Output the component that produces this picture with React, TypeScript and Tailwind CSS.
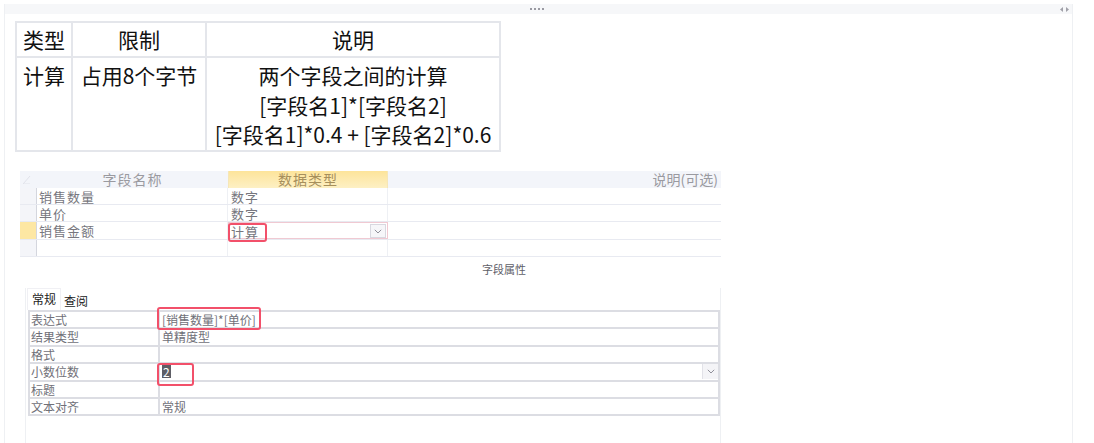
import React from "react";

const Chevron = ({ size = 8 }: { size?: number }) => (
  <svg width={size} height={size * 0.6} viewBox="0 0 10 6" fill="none">
    <path d="M1 1 L5 5 L9 1" stroke="#8a8a94" strokeWidth="1.2" />
  </svg>
);

export default function App() {
  const rows = [
    { name: "销售数量", type: "数字" },
    { name: "单价", type: "数字" },
    { name: "销售金额", type: "计算", sel: true },
    { name: "", type: "" },
  ];
  const props = [
    { k: "表达式", v: "[销售数量]*[单价]" },
    { k: "结果类型", v: "单精度型" },
    { k: "格式", v: "" },
    { k: "小数位数", v: "2", dd: true },
    { k: "标题", v: "" },
    { k: "文本对齐", v: "常规" },
  ];
  return (
    <div className="w-[1094px] h-[443px] bg-white overflow-hidden font-['Noto_Sans_CJK_SC','Noto_Sans',sans-serif]">
      <div className="ml-[4px] mt-[4px] w-[1069px] h-[439px] border-x border-[#eef0f3] flex flex-col">
        {/* top bar */}
        <div className="h-[10px] bg-[#f6f7f9] flex items-center">
          <div className="flex-1" />
          <div className="flex gap-[2px]">
            <span className="w-[2px] h-[2px] bg-[#9a9aa2]" />
            <span className="w-[2px] h-[2px] bg-[#9a9aa2]" />
            <span className="w-[2px] h-[2px] bg-[#9a9aa2]" />
            <span className="w-[2px] h-[2px] bg-[#9a9aa2]" />
          </div>
          <div className="flex-1 flex justify-end pr-[3px] gap-[3px]">
            <svg width="3" height="5" viewBox="0 0 3 5"><path d="M3 0 L0 2.5 L3 5Z" fill="#a0a0a8" /></svg>
            <svg width="3" height="5" viewBox="0 0 3 5"><path d="M0 0 L3 2.5 L0 5Z" fill="#a0a0a8" /></svg>
          </div>
        </div>

        {/* spec table */}
        <table className="mt-[7px] ml-[10px] w-[486px] border-collapse text-[21px] text-[#111] leading-[29.5px]">
          <tbody>
            <tr className="h-[35px]">
              <td className="w-[56px] border-2 border-[#e4e6eb] text-center align-middle">类型</td>
              <td className="w-[134px] border-2 border-[#e4e6eb] text-center align-middle">限制</td>
              <td className="border-2 border-[#e4e6eb] text-center align-middle">说明</td>
            </tr>
            <tr className="h-[94px]">
              <td className="border-2 border-[#e4e6eb] text-center align-top pt-[3px]">计算</td>
              <td className="border-2 border-[#e4e6eb] text-center align-top pt-[3px]">占用8个字节</td>
              <td className="border-2 border-[#e4e6eb] text-center align-top pt-[3px] whitespace-nowrap">
                <div>两个字段之间的计算</div>
                <div>[字段名1]*[字段名2]</div>
                <div>[字段名1]*0.4 + [字段名2]*0.6</div>
              </td>
            </tr>
          </tbody>
        </table>

        {/* access design grid */}
        <div className="mt-[19px] ml-[15px] w-[701px] text-[13px] leading-[17px]">
          <div className="flex h-[17px]">
            <div className="w-[17px] bg-[#f3f5fa]">
              <svg width="8" height="8" viewBox="0 0 8 8" className="ml-[3px] mt-[5px]">
                <path d="M7 0 L0 8 L7 8" fill="none" stroke="#e0e2ea" strokeWidth="1" />
              </svg>
            </div>
            <div className="w-[191px] bg-[#f3f5fa] text-center text-[14px] tracking-[1px] text-[#9a9aa0]">字段名称</div>
            <div className="w-[160px] bg-gradient-to-b from-[#fde49a] to-[#fdf0c4] text-center text-[14px] tracking-[1px] text-[#a68f5c] border-x border-[#f5e6b8]">数据类型</div>
            <div className="flex-1 bg-[#f3f5fa] text-right pr-[3px] text-[14px] text-[#9a9aa0]">说明(可选)</div>
          </div>
          {rows.map((r, i) => (
            <div key={i} className={`flex ${i === 2 ? "h-[18px]" : "h-[17px]"} border-b border-[#e8eaf1]`}>
              <div className={`w-[17px] border-r border-[#d4d6de] ${r.sel ? "bg-[#fde7a3]" : "bg-[#f4f5f9]"}`} />
              <div className="w-[191px] border-r border-[#eef0f4] pl-[2px] tracking-[1px] text-[#77777e]">{r.name}</div>
              <div className={`w-[160px] border-r border-[#eef0f4] tracking-[1px] text-[#77777e] flex ${r.sel ? "border border-[#f0c9d2] relative" : "pl-[3px]"}`}>
                {r.sel ? (
                  <>
                    <span className="pl-[2px]">{r.type}</span>
                    <div className="absolute left-[-1px] top-[0px] w-[39px] h-[19px] border-2 border-[#f2506a] rounded-[3px]" />
                    <div className="ml-auto mr-[1px] mt-[1px] w-[16px] h-[14px] border border-[#d8d8e0] bg-[#f6f6f9] flex items-center justify-center">
                      <Chevron />
                    </div>
                  </>
                ) : (
                  r.type
                )}
              </div>
              <div className="flex-1" />
            </div>
          ))}
        </div>

        <div className="mt-[4px] ml-[477px] text-[11px] leading-[16px] text-[#606068]">字段属性</div>

        {/* properties pane */}
        <div className="mt-[11px] ml-[20px] w-[696px] flex-1 border-x border-[#eef0f3] pl-[2px] text-[12px] leading-[15px]">
          <div className="flex items-end h-[22px]">
            <div className="ml-[-1px] px-[4px] pt-[2px] pb-[4px] bg-white border-x border-t border-[#f0f0f4] text-[#222]">常规</div>
            <div className="px-[3px] pb-[2px] text-[#222]">查阅</div>
          </div>
          <div className="w-[692px] border-t-2 border-x-2 border-[#dcdde3]">
            {props.map((p, i) => (
              <div key={i} className="flex h-[17.4px] border-b-2 border-[#dcdde3] text-[#707078]">
                <div className="w-[130px] border-r-2 border-[#dcdde3] pl-[1px]">{p.k}</div>
                <div className="flex-1 relative pl-[2px] flex">
                  {p.v === "2" ? (
                    <span className="bg-[#5e5e66] text-white px-[1px] h-[13px] leading-[13px] mt-[1px]">2</span>
                  ) : (
                    <span>{p.v}</span>
                  )}
                  {i === 0 && (
                    <div className="absolute left-[-3px] top-[-5px] w-[104px] h-[23px] border-2 border-[#f2506a] rounded-[3px]" />
                  )}
                  {i === 3 && (
                    <div className="absolute left-[-3px] top-[-1px] w-[37px] h-[23px] border-2 border-[#f2506a] rounded-[3px]" />
                  )}
                  {p.dd && (
                    <div className="ml-auto w-[16px] h-[15px] border-l border-[#e2e2e8] bg-[#f4f4f7] flex items-center justify-center">
                      <Chevron />
                    </div>
                  )}
                </div>
              </div>
            ))}
          </div>
        </div>
      </div>
    </div>
  );
}
